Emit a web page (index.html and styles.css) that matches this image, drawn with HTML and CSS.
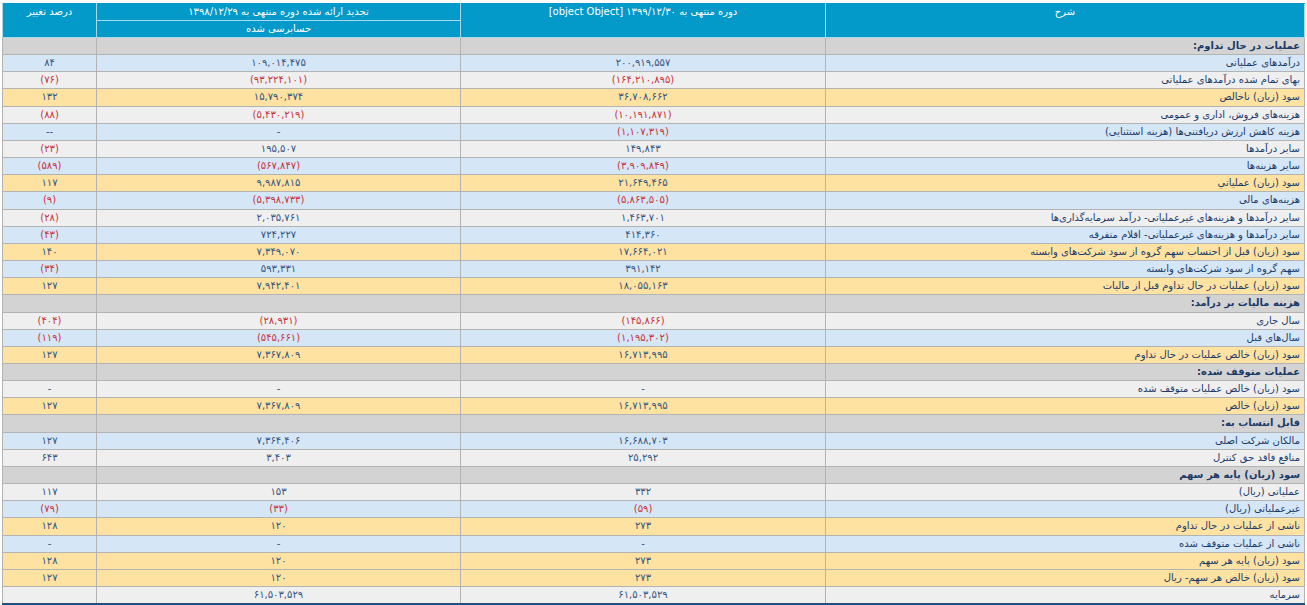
FILE: index.html
```html
<!DOCTYPE html>
<html lang="fa" dir="rtl">
<head>
<meta charset="utf-8">
<title>صورت سود و زیان</title>
<link rel="stylesheet" href="styles.css">
</head>
<body>
<table class="fin">
  <colgroup>
    <col class="c-desc">
    <col class="c-cur">
    <col class="c-prev">
    <col class="c-pct">
  </colgroup>
  <thead>
    <tr>
      <th rowspan="2">شرح</th>
      <th rowspan="2">دوره منتهی به ۱۳۹۹/۱۲/۳۰ [object Object]</th>
      <th>تجدید ارائه شده دوره منتهی به ۱۳۹۸/۱۲/۲۹</th>
      <th rowspan="2">درصد تغییر</th>
    </tr>
    <tr>
      <th>حسابرسی شده</th>
    </tr>
  </thead>
  <tbody>
    <tr class="sec"><td>عملیات در حال تداوم:</td><td></td><td></td><td></td></tr>
    <tr class="blue"><td>درآمدهای عملیاتی</td><td>۲۰۰,۹۱۹,۵۵۷</td><td>۱۰۹,۰۱۴,۴۷۵</td><td>۸۴</td></tr>
    <tr class="light"><td>بهای تمام شده درآمدهای عملیاتی</td><td class="neg">(۱۶۴,۲۱۰,۸۹۵)</td><td class="neg">(۹۳,۲۲۴,۱۰۱)</td><td class="neg">(۷۶)</td></tr>
    <tr class="orange"><td>سود (زیان) ناخالص</td><td>۳۶,۷۰۸,۶۶۲</td><td>۱۵,۷۹۰,۳۷۴</td><td>۱۳۲</td></tr>
    <tr class="light"><td>هزینه‌های فروش، اداری و عمومی</td><td class="neg">(۱۰,۱۹۱,۸۷۱)</td><td class="neg">(۵,۴۳۰,۲۱۹)</td><td class="neg">(۸۸)</td></tr>
    <tr class="blue"><td>هزینه کاهش ارزش دریافتنی‌ها (هزینه استثنایی)</td><td class="neg">(۱,۱۰۷,۳۱۹)</td><td>-</td><td>--</td></tr>
    <tr class="light"><td>سایر درآمدها</td><td>۱۴۹,۸۴۳</td><td>۱۹۵,۵۰۷</td><td class="neg">(۲۳)</td></tr>
    <tr class="blue"><td>سایر هزینه‌ها</td><td class="neg">(۳,۹۰۹,۸۴۹)</td><td class="neg">(۵۶۷,۸۴۷)</td><td class="neg">(۵۸۹)</td></tr>
    <tr class="orange"><td>سود (زیان) عملیاتي</td><td>۲۱,۶۴۹,۴۶۵</td><td>۹,۹۸۷,۸۱۵</td><td>۱۱۷</td></tr>
    <tr class="blue"><td>هزینه‌های مالی</td><td class="neg">(۵,۸۶۳,۵۰۵)</td><td class="neg">(۵,۳۹۸,۷۳۳)</td><td class="neg">(۹)</td></tr>
    <tr class="light"><td>سایر درآمدها و هزینه‌های غیرعملیاتی- درآمد سرمایه‌گذاری‌ها</td><td>۱,۴۶۳,۷۰۱</td><td>۲,۰۳۵,۷۶۱</td><td class="neg">(۲۸)</td></tr>
    <tr class="blue"><td>سایر درآمدها و هزینه‌های غیرعملیاتی- اقلام متفرقه</td><td>۴۱۴,۳۶۰</td><td>۷۲۴,۲۲۷</td><td class="neg">(۴۳)</td></tr>
    <tr class="orange"><td>سود (زیان) قبل از احتساب سهم گروه از سود شرکت‌های وابسته</td><td>۱۷,۶۶۴,۰۲۱</td><td>۷,۳۴۹,۰۷۰</td><td>۱۴۰</td></tr>
    <tr class="blue"><td>سهم گروه از سود شرکت‌های وابسته</td><td>۳۹۱,۱۴۲</td><td>۵۹۳,۳۳۱</td><td class="neg">(۳۴)</td></tr>
    <tr class="orange"><td>سود (زیان) عملیات در حال تداوم قبل از مالیات</td><td>۱۸,۰۵۵,۱۶۳</td><td>۷,۹۴۲,۴۰۱</td><td>۱۲۷</td></tr>
    <tr class="sec"><td>هزینه مالیات بر درآمد:</td><td></td><td></td><td></td></tr>
    <tr class="light"><td>سال جاری</td><td class="neg">(۱۴۵,۸۶۶)</td><td class="neg">(۲۸,۹۳۱)</td><td class="neg">(۴۰۴)</td></tr>
    <tr class="blue"><td>سال‌های قبل</td><td class="neg">(۱,۱۹۵,۳۰۲)</td><td class="neg">(۵۴۵,۶۶۱)</td><td class="neg">(۱۱۹)</td></tr>
    <tr class="orange"><td>سود (زیان) خالص عملیات در حال تداوم</td><td>۱۶,۷۱۳,۹۹۵</td><td>۷,۳۶۷,۸۰۹</td><td>۱۲۷</td></tr>
    <tr class="sec"><td>عملیات متوقف شده:</td><td></td><td></td><td></td></tr>
    <tr class="light"><td>سود (زیان) خالص عملیات متوقف شده</td><td>-</td><td>-</td><td>-</td></tr>
    <tr class="orange"><td>سود (زیان) خالص</td><td>۱۶,۷۱۳,۹۹۵</td><td>۷,۳۶۷,۸۰۹</td><td>۱۲۷</td></tr>
    <tr class="sec"><td>قابل انتساب به:</td><td></td><td></td><td></td></tr>
    <tr class="blue"><td>مالکان شرکت اصلی</td><td>۱۶,۶۸۸,۷۰۳</td><td>۷,۳۶۴,۴۰۶</td><td>۱۲۷</td></tr>
    <tr class="light"><td>منافع فاقد حق کنترل</td><td>۲۵,۲۹۲</td><td>۳,۴۰۳</td><td>۶۴۳</td></tr>
    <tr class="sec"><td>سود (زیان) پایه هر سهم</td><td></td><td></td><td></td></tr>
    <tr class="light"><td>عملیاتی (ریال)</td><td>۳۳۲</td><td>۱۵۳</td><td>۱۱۷</td></tr>
    <tr class="blue"><td>غیرعملیاتی (ریال)</td><td class="neg">(۵۹)</td><td class="neg">(۳۳)</td><td class="neg">(۷۹)</td></tr>
    <tr class="orange"><td>ناشی از عملیات در حال تداوم</td><td>۲۷۳</td><td>۱۲۰</td><td>۱۲۸</td></tr>
    <tr class="blue"><td>ناشی از عملیات متوقف شده</td><td>-</td><td>-</td><td>-</td></tr>
    <tr class="orange"><td>سود (زیان) پایه هر سهم</td><td>۲۷۳</td><td>۱۲۰</td><td>۱۲۸</td></tr>
    <tr class="orange"><td>سود (زیان) خالص هر سهم- ریال</td><td>۲۷۳</td><td>۱۲۰</td><td>۱۲۷</td></tr>
    <tr class="light"><td>سرمایه</td><td>۶۱,۵۰۳,۵۲۹</td><td>۶۱,۵۰۳,۵۲۹</td><td></td></tr>
  </tbody>
</table>
</body>
</html>
```

FILE: styles.css
```css
html, body {
  margin: 0;
  background: #ffffff;
}

body {
  padding: 3px 2px 0 3px;
  font-family: "DejaVu Sans", sans-serif;
  font-size: 10px;
  color: #1b3a68;
}

.fin {
  width: 1302px;
  border-collapse: collapse;
  table-layout: fixed;
  border-bottom: 2px solid #21507c;
}

.c-desc { width: 479px; }
.c-cur { width: 365px; }
.c-prev { width: 364px; }
.c-pct { width: 94px; }

.fin th {
  background: #0399c9;
  color: #ffffff;
  font-weight: normal;
  font-size: 10px;
  line-height: 12px;
  padding: 2px 4px 2px;
  height: 12px;
  vertical-align: top;
  text-align: center;
  border: 1px solid #a9d8ea;
  border-top-color: #0399c9;
}

.fin thead tr:first-child th {
  height: 11px;
}

.fin td {
  border: 1px solid #b3b3b3;
  line-height: 12.15px;
  padding: 2px 4px;
  text-align: center;
  color: #35557f;
  white-space: nowrap;
  overflow: hidden;
}

.fin td:first-child {
  text-align: right;
  color: #1b3a68;
}

.fin td.neg {
  color: #c8333b;
}

.blue td { background: #d5e6f6; }
.light td { background: #efefef; }
.orange td { background: #fde2a1; }
.sec td { background: #d3d3d3; }
.sec td:first-child { font-weight: bold; }
```
